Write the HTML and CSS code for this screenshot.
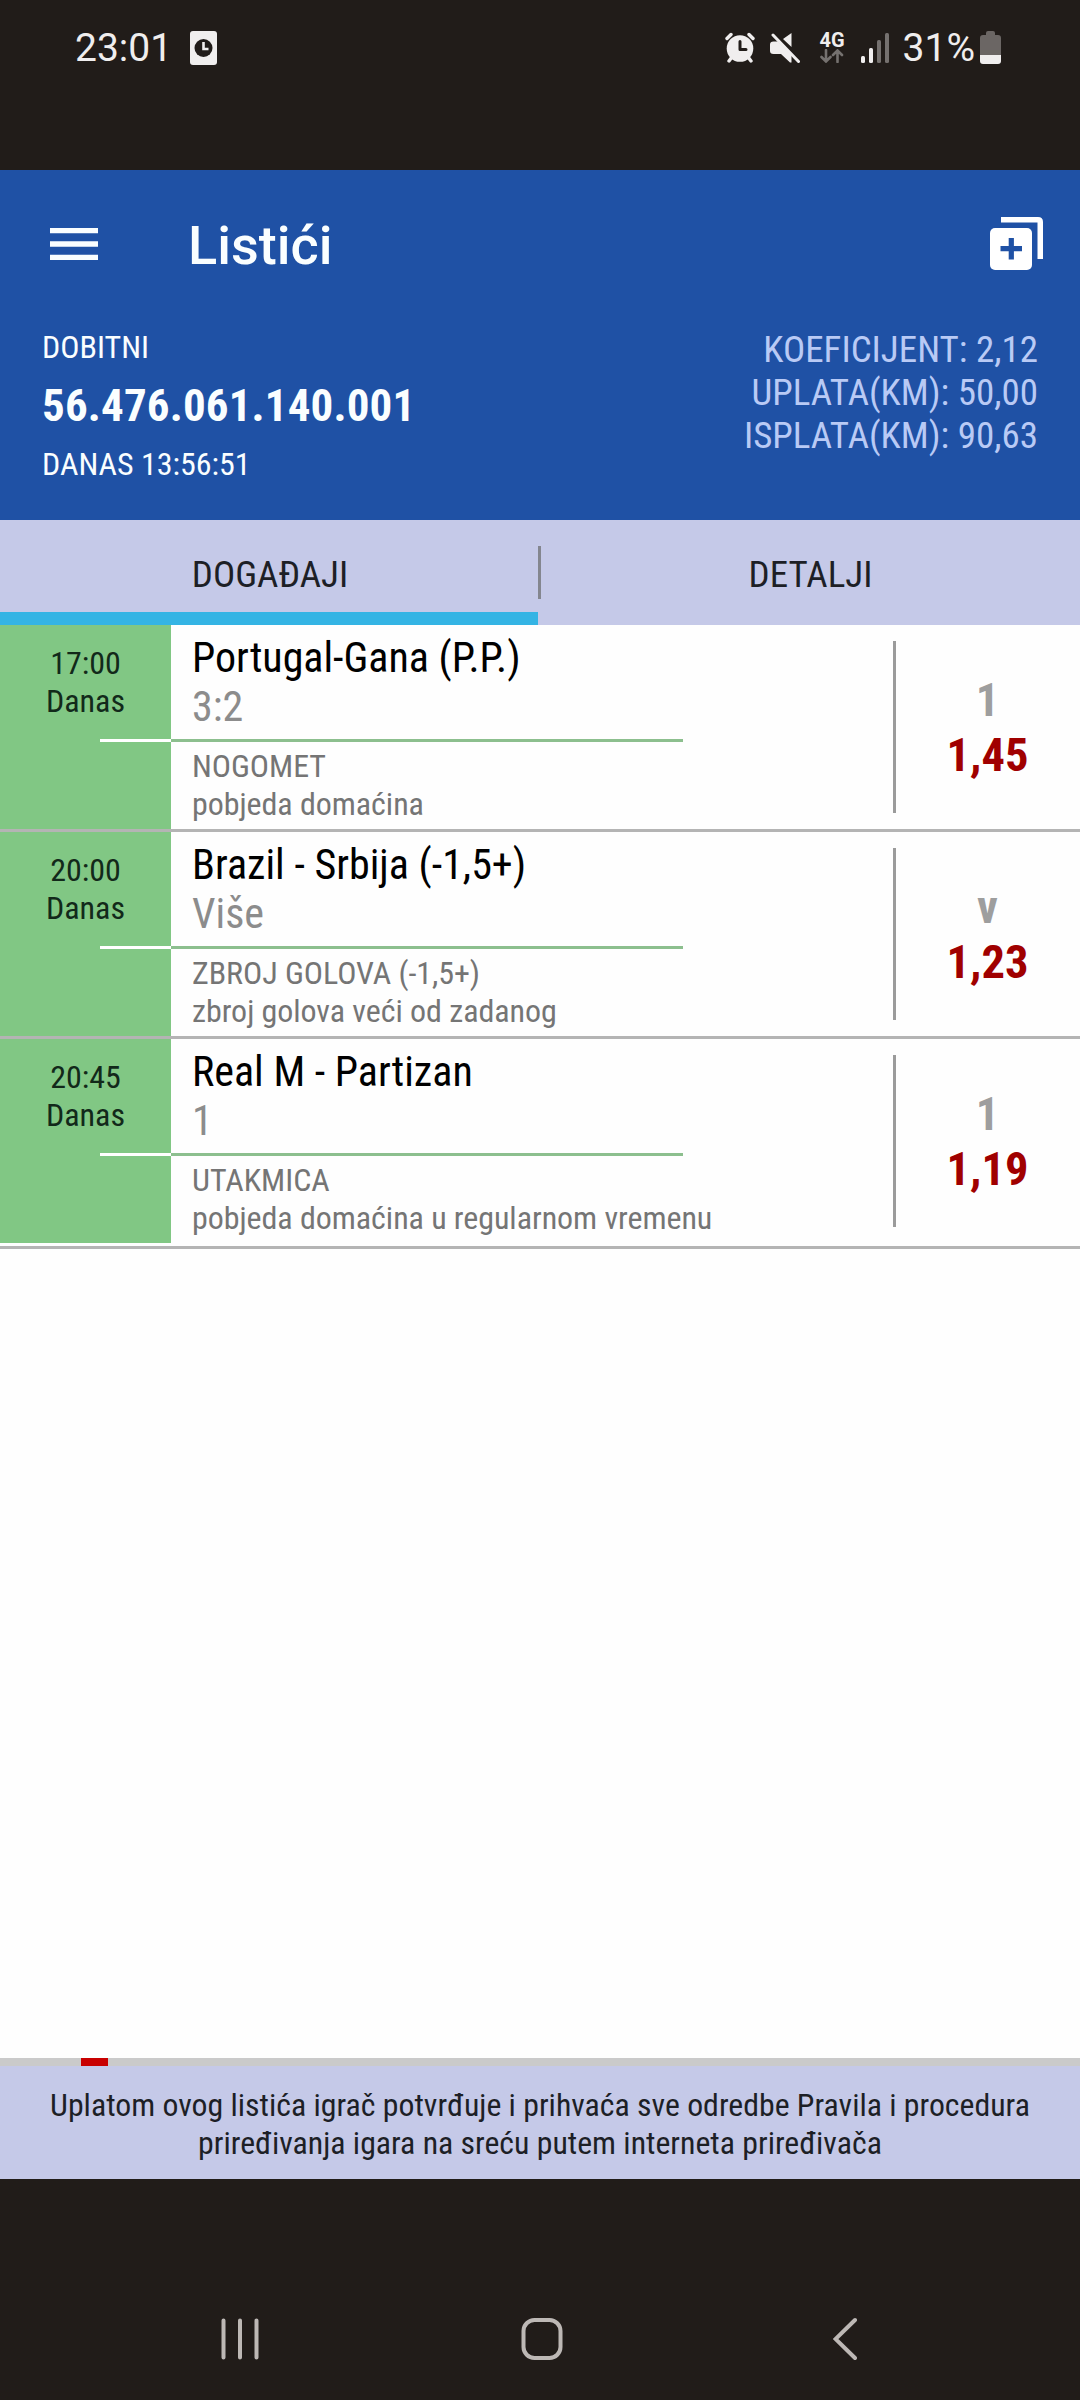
FILE: index.html
```html
<!DOCTYPE html>
<html lang="hr">
<head>
    <meta charset="UTF-8">
    <meta name="viewport" content="width=device-width, initial-scale=1.0">
    <title>Listići</title>
    <link rel="stylesheet" href="styles.css">
</head>
<body>
    <div class="status-bar">
        <span class="clock">23:01</span>
        <svg class="icon-notification" width="27" height="34" viewBox="0 0 27 34">
            <rect width="27" height="34" rx="3" fill="#f0eeee"/>
            <circle cx="13.5" cy="17" r="9" fill="#211c19"/>
            <path d="M13.5 11v7h5" fill="none" stroke="#f0eeee" stroke-width="2.6"/>
        </svg>
        <div class="status-icons">
            <svg class="icon-alarm" width="30" height="32" viewBox="0 0 30 32">
                <g stroke="#f0eeee" stroke-width="3.4" stroke-linecap="round">
                    <path d="M2 6.500l4-4M28 6.500l-4-4M4 29l3-4M26 29l-3-4"/>
                </g>
                <circle cx="15" cy="16.500" r="13.300" fill="#f0eeee"/>
                <path d="M15 9.500v8h6" fill="none" stroke="#211c19" stroke-width="3" stroke-linecap="round" stroke-linejoin="round"/>
            </svg>
            <svg class="icon-mute" width="30" height="32" viewBox="0 0 30 32">
                <path d="M21.500 1v14l-8.500-8zM3.500 9.500h4.500l13.500 13.500v7.500h-1.500l-9-8.500h-7.500q-3.500 0-3.500-3v-6.500q0-3 3.500-3z" fill="#f0eeee"/>
                <path d="M4 1.500l25 26.500" stroke="#211c19" stroke-width="2"/>
                <path d="M3 3l25.500 26.500" stroke="#f0eeee" stroke-width="3" stroke-linecap="round"/>
            </svg>
            <div class="network">
                <span>4G</span>
                <svg width="24" height="14" viewBox="0 0 24 14">
                    <path d="M6 1v11M1.500 8l4.500 4.500 4.500-4.500M17.500 13v-11M13 6l4.500-4.500 4.500 4.500" fill="none" stroke="#75716f" stroke-width="2.600" stroke-linecap="round"/>
                </svg>
            </div>
            <svg class="icon-signal" width="28" height="30" viewBox="0 0 28 30">
                <rect x="0" y="23" width="4" height="7" rx="1.500" fill="#f0eeee"/>
                <rect x="8" y="15" width="4" height="15" rx="1.500" fill="#f0eeee"/>
                <rect x="16" y="7" width="4" height="23" rx="1.500" fill="#75716f"/>
                <rect x="24" y="0" width="4" height="30" rx="1.500" fill="#75716f"/>
            </svg>
            <span class="battery-text">31%</span>
            <svg class="icon-battery" width="21" height="33" viewBox="0 0 21 33">
                <path d="M6 4v-2q0-2 2-2h5q2 0 2 2v2h3q3 0 3 3v17h-21v-17q0-3 3-3z" fill="#6b6664"/>
                <path d="M0 24h21v6q0 3-3 3h-15q-3 0-3-3z" fill="#f0eeee"/>
            </svg>
        </div>
    </div>

    <header class="header">
        <div class="app-bar">
            <svg class="icon-menu" width="48" height="32" viewBox="0 0 48 32">
                <path d="M0 2.700h48M0 16h48M0 29.300h48" stroke="#fafeff" stroke-width="5.300"/>
            </svg>
            <h1>Listići</h1>
            <svg class="icon-add" width="53" height="53" viewBox="0 0 53 53">
                <path d="M11 0h37q5 0 5 5v37h-5.500v-36.500h-36.500z" fill="#fff"/>
                <rect x="0" y="11" width="42" height="42" rx="5" fill="#fff"/>
                <path d="M10.500 31.700h21.500M21.300 21v21.500" stroke="#1f51a5" stroke-width="5.200"/>
            </svg>
        </div>
        <div class="ticket">
            <div class="ticket-left">
                <p>DOBITNI</p>
                <p class="ticket-number">56.476.061.140.001</p>
                <p>DANAS 13:56:51</p>
            </div>
            <div class="ticket-right">
                <p>KOEFICIJENT: 2,12</p>
                <p>UPLATA(KM): 50,00</p>
                <p>ISPLATA(KM): 90,63</p>
            </div>
        </div>
    </header>

    <nav class="tabs">
        <div class="tab active">DOGAĐAJI</div>
        <div class="tab-divider"></div>
        <div class="tab">DETALJI</div>
    </nav>

    <main class="events">
        <div class="event">
            <div class="event-time">
                <p>17:00</p>
                <p>Danas</p>
                <div class="line"></div>
            </div>
            <div class="event-info">
                <p class="event-title">Portugal-Gana (P.P.)</p>
                <p class="event-result">3:2</p>
                <div class="line"></div>
                <p class="event-detail">NOGOMET</p>
                <p class="event-detail">pobjeda domaćina</p>
            </div>
            <div class="event-odds">
                <p class="pick">1</p>
                <p class="odd">1,45</p>
            </div>
        </div>
        <div class="event">
            <div class="event-time">
                <p>20:00</p>
                <p>Danas</p>
                <div class="line"></div>
            </div>
            <div class="event-info">
                <p class="event-title">Brazil - Srbija (-1,5+)</p>
                <p class="event-result">Više</p>
                <div class="line"></div>
                <p class="event-detail">ZBROJ GOLOVA (-1,5+)</p>
                <p class="event-detail">zbroj golova veći od zadanog</p>
            </div>
            <div class="event-odds">
                <p class="pick">v</p>
                <p class="odd">1,23</p>
            </div>
        </div>
        <div class="event">
            <div class="event-time">
                <p>20:45</p>
                <p>Danas</p>
                <div class="line"></div>
            </div>
            <div class="event-info">
                <p class="event-title">Real M - Partizan</p>
                <p class="event-result">1</p>
                <div class="line"></div>
                <p class="event-detail">UTAKMICA</p>
                <p class="event-detail">pobjeda domaćina u regularnom vremenu</p>
            </div>
            <div class="event-odds">
                <p class="pick">1</p>
                <p class="odd">1,19</p>
            </div>
        </div>
    </main>

    <div class="progress"><div class="progress-mark"></div></div>
    <footer class="notice">
        <p>Uplatom ovog listića igrač potvrđuje i prihvaća sve odredbe Pravila i procedura</p>
        <p>priređivanja igara na sreću putem interneta priređivača</p>
    </footer>

    <div class="nav-bar">
        <svg width="38" height="44" viewBox="0 0 38 44">
            <path d="M2.500 3.500v37M19 3.500v37M35.500 3.500v37" stroke="#bdb8b5" stroke-width="4" stroke-linecap="round"/>
        </svg>
        <svg class="nav-home" width="42" height="44" viewBox="0 0 42 44">
            <rect x="2.500" y="3" width="37" height="38" rx="11" fill="none" stroke="#bdb8b5" stroke-width="4"/>
        </svg>
        <svg class="nav-back" width="24" height="44" viewBox="0 0 24 44">
            <path d="M22 3l-19.500 19 19.500 19" fill="none" stroke="#bdb8b5" stroke-width="4" stroke-linecap="round"/>
        </svg>
    </div>
</body>
</html>
```
FILE: styles.css
```css
* {
    box-sizing: border-box;
}

body {
    margin: 0;
    width: 1080px;
    height: 2400px;
    display: flex;
    flex-direction: column;
    background-color: #fefefe;
    font-family: "Roboto Condensed", Roboto, sans-serif;
    font-stretch: 75%;
    font-size: 32px;
    line-height: 38px;
}

p, h1 {
    margin: 0;
    white-space: nowrap;
}

svg {
    display: block;
    flex-shrink: 0;
}

/* status bar */
.status-bar {
    height: 170px;
    padding: 0 79px 75px 75px;
    display: flex;
    align-items: center;
    background-color: #211c19;
    color: #f0eeee;
    font-family: Roboto, sans-serif;
    font-stretch: 100%;
    font-size: 39px;
}

.icon-notification {
    margin-left: 18px;
}

.status-icons {
    display: flex;
    align-items: center;
    margin-left: auto;
}

.icon-mute {
    margin-left: 15px;
}

.network {
    display: flex;
    flex-direction: column;
    align-items: center;
    margin-left: 19px;
    font-size: 20px;
    font-weight: bold;
    line-height: 17px;
}

.icon-signal {
    margin-left: 16px;
}

.battery-text {
    margin-left: 14px;
}

.icon-battery {
    margin-left: 5px;
}

/* header */
.header {
    height: 350px;
    background-color: #1f51a5;
    color: #fafeff;
}

.app-bar {
    height: 146px;
    padding: 1px 37px 0 50px;
    display: flex;
    align-items: center;
}

.app-bar h1 {
    margin-left: 90px;
    padding-top: 5px;
    font-family: Roboto, sans-serif;
    font-stretch: 100%;
    font-size: 54px;
    font-weight: 500;
    line-height: 64px;
}

.icon-add {
    margin-left: auto;
}

.ticket {
    padding: 12px 42px 0;
    display: flex;
    justify-content: space-between;
}

.ticket-left {
    display: flex;
    flex-direction: column;
    gap: 13px;
}

.ticket-number {
    font-size: 45px;
    font-weight: bold;
    line-height: 53px;
    letter-spacing: 0.15px;
}

.ticket-right {
    color: #b9caf5;
    font-size: 37px;
    line-height: 43px;
    text-align: right;
}

/* tabs */
.tabs {
    height: 105px;
    display: flex;
    background-color: #c5c9e8;
    color: #1d1f26;
    font-size: 37px;
    text-align: center;
}

.tab {
    flex: 1;
    padding-top: 36px;
}

.tab.active {
    flex: 0 0 538px;
    padding-left: 2px;
    border-bottom: 13px solid #34b4e4;
}

.tab-divider {
    width: 3px;
    height: 53px;
    margin-top: 26px;
    background-color: #84868f;
}

/* events */
.events {
    flex: 1;
}

.event {
    display: flex;
    height: 207px;
    border-bottom: 3px solid #b4b4b4;
}

.event:last-child {
    height: 210px;
    padding-bottom: 3px;
}

.event-time {
    width: 171px;
    padding-top: 19px;
    background-color: #81c784;
    color: #12291a;
    text-align: center;
}

.event-time .line {
    height: 3px;
    margin: 19px 0 0 100px;
    background-color: #fff;
}

.event-info {
    width: 722px;
    padding-top: 8px;
}

.event-info p {
    padding-left: 21px;
}

.event-info .line {
    width: 512px;
    height: 3px;
    margin: 8px 0 5px;
    background-color: #8cbf8e;
}

.event-title, .event-result {
    color: #000;
    font-size: 42px;
    line-height: 49px;
}

.event-result {
    color: #8c8c8c;
}

.event-detail {
    color: #757575;
    letter-spacing: -0.05px;
}

.event-odds {
    width: 187px;
    height: 172px;
    margin-top: 16px;
    padding: 32px 1px 0 0;
    border-left: 3px solid #9b9b9b;
    font-size: 46.5px;
    font-weight: bold;
    line-height: 55px;
    text-align: center;
}

.pick {
    color: #9e9e9e;
}

.odd {
    color: #a00000;
}

/* footer */
.progress {
    height: 8px;
    background-color: #cacaca;
}

.progress-mark {
    width: 27px;
    height: 8px;
    margin-left: 81px;
    background-color: #c80000;
}

.notice {
    height: 113px;
    padding-top: 20px;
    background-color: #c5c9e8;
    color: #1d1f26;
    font-size: 31.8px;
    text-align: center;
}

.nav-bar {
    height: 221px;
    padding: 138px 0 0 221px;
    display: flex;
    background-color: #211c19;
}

.nav-home {
    margin-left: 262px;
}

.nav-back {
    margin-left: 270px;
}
```
